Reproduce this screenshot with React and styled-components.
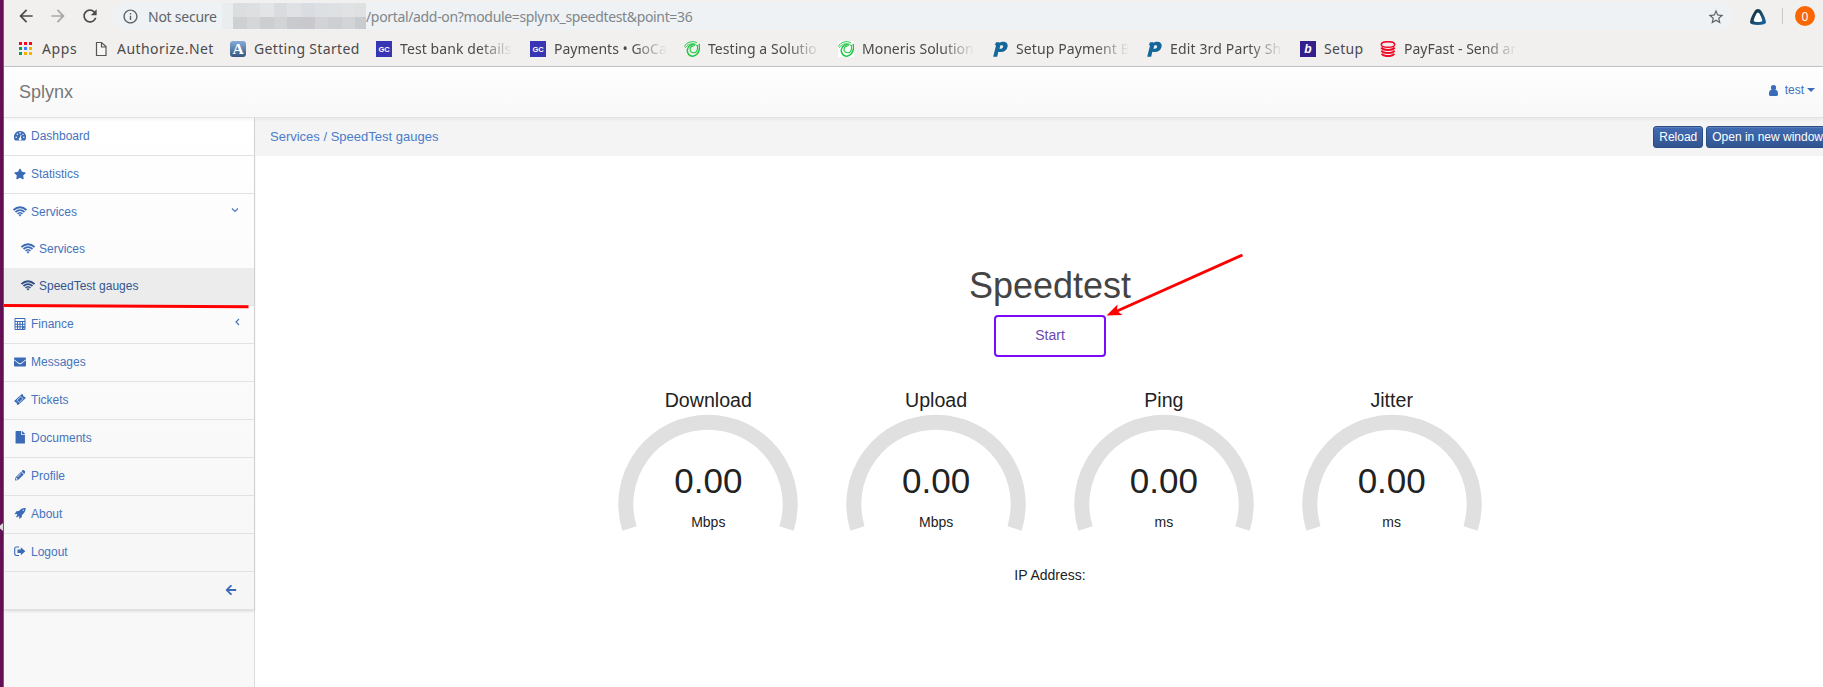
import React from 'react';
import styled, { createGlobalStyle } from 'styled-components';
import { FaStar, FaEnvelope, FaFile, FaPencilAlt, FaArrowLeft } from 'react-icons/fa';
import { MdArrowBack, MdArrowForward, MdRefresh, MdInfoOutline, MdStarBorder } from 'react-icons/md';

const GlobalStyle = createGlobalStyle`
  * { box-sizing: border-box; }
  body { margin: 0; background: #fff; font-family: "Liberation Sans", Arial, sans-serif; overflow: hidden; }
`;

const Screen = styled.div`
  position: relative;
  display: flex;
  width: 1823px;
  height: 687px;
  overflow: hidden;
`;
const DesktopEdge = styled.div`
  flex: none;
  display: flex;
  align-items: flex-end;
  width: 4px;
  padding-bottom: 156px;
  background: #650f54;
  border-right: 1px solid #8a5280;
`;
const EdgeMark = styled.svg`
  display: block;
  width: 3px;
  height: 8px;
`;
const Browser = styled.div`
  flex: 1;
  min-width: 0;
  display: flex;
  flex-direction: column;
`;

/* browser chrome */
const Toolbar = styled.div`
  flex: none;
  display: flex;
  align-items: center;
  height: 34px;
  padding: 0 7px 2px 12px;
  background: #f2f0ef;
  font-family: "Noto Sans", "Open Sans", sans-serif;
`;
const NavIcon = styled.span`
  display: flex;
  width: 20px;
  margin-right: 12px;
  font-size: 20px;
  color: ${(p) => (p.$muted ? '#a8a7a6' : '#4c4b4b')};
`;
const Omnibox = styled.div`
  display: flex;
  align-items: center;
  width: 1621px;
  height: 28px;
  margin-left: 1px;
  padding: 0 9px 0 9px;
  border-radius: 14px;
  background: #eef2f4;
  font-size: 14px;
  color: #80868b;
`;
const InfoIcon = styled.span`
  display: flex;
  margin-top: 1px;
  font-size: 17px;
  color: #5f6368;
`;
const Security = styled.span`
  width: 74px;
  margin-left: 9px;
  white-space: nowrap;
  letter-spacing: -0.25px;
  color: #5f6368;
`;
const Redacted = styled.span`
  display: grid;
  grid-template-columns: 11px repeat(9, 13.6px) 10.6px;
  grid-template-rows: 14px 12px;
  width: 144px;
`;
const Cell = styled.span`
  background: ${(p) => p.$c};
`;
const Path = styled.span`
  flex: 1;
  white-space: nowrap;
  letter-spacing: -0.34px;
`;
const StarIcon = styled.span`
  display: flex;
  margin-top: 2px;
  font-size: 18px;
  color: #5f6368;
`;
const Extension = styled.span`
  display: flex;
  margin: 2px 16px 0 16px;
`;
const Divider = styled.span`
  width: 1px;
  height: 16px;
  background: #c9c8c8;
`;
const Avatar = styled.span`
  display: flex;
  align-items: center;
  justify-content: center;
  width: 20px;
  height: 20px;
  margin-left: 12px;
  border-radius: 50%;
  background: #f96702;
  font-size: 12px;
  color: #fff;
`;
const Bookmarks = styled.div`
  flex: none;
  display: flex;
  height: 33px;
  padding: 7px 0 0 14px;
  background: #f2f0ef;
  border-bottom: 1px solid #c8c7c8;
  font-family: "Noto Sans", "Open Sans", sans-serif;
  font-size: 14px;
`;
const Bookmark = styled.div`
  flex: none;
  display: flex;
  width: ${(p) => p.$w}px;
  height: 17px;
`;
const Favicon = styled.svg`
  flex: none;
  display: block;
  width: 16px;
  height: 16px;
  margin-right: 8px;
`;
const BookmarkName = styled.span`
  width: ${(p) => (p.$fade ? '113px' : 'auto')};
  height: 22px;
  margin-top: -3px;
  line-height: 22px;
  overflow: hidden;
  white-space: nowrap;
  letter-spacing: ${(p) => p.$ls || 0}px;
  color: #4a4a4b;
  ${(p) => p.$fade && 'mask-image: linear-gradient(to right, #000 calc(100% - 34px), transparent);'}
`;

/* portal */
const Header = styled.header`
  position: relative;
  z-index: 1;
  flex: none;
  display: flex;
  justify-content: space-between;
  height: 51px;
  padding: 0 8px 0 15px;
  border-bottom: 1px solid #e3e3e3;
  background: linear-gradient(#fefefe, #f8f8f8);
  box-shadow: 0 1px 4px rgba(0, 0, 0, 0.07);
`;
const Brand = styled.span`
  font-size: 18px;
  line-height: 50px;
  color: #777;
`;
const UserMenu = styled.span`
  display: flex;
  align-items: center;
  height: 46px;
  font-size: 12px;
  color: #4370bb;
`;
const UserName = styled.span`
  margin: 0 3px 0 7px;
`;
const Caret = styled.i`
  border: 4px solid transparent;
  border-bottom: 0;
  border-top-color: #3b6cb8;
`;
const Body = styled.div`
  flex: 1;
  min-height: 0;
  display: flex;
`;
const Sidebar = styled.aside`
  flex: none;
  width: 251px;
  border-right: 1px solid #dcdcdc;
  background: #f8f8f8;
`;
const Menu = styled.nav`
  display: flex;
  flex-direction: column;
  background: linear-gradient(#fff, #f6f6f6);
  box-shadow: 0 1px 3px rgba(0, 0, 0, 0.14);
`;
const MenuItem = styled.a`
  display: flex;
  align-items: center;
  height: ${(p) => (p.$line ? 38 : 37)}px;
  padding: 0 15px 2px ${(p) => (p.$sub ? 17 : 9)}px;
  border-bottom: ${(p) => (p.$line ? '1px solid #e2e2e2' : '0')};
  background: ${(p) => (p.$active ? '#ececec' : 'transparent')};
  font-size: 12px;
  color: ${(p) => (p.$active ? '#34568f' : '#4673bd')};
`;
const MenuIcon = styled.span`
  display: flex;
  align-items: center;
  justify-content: center;
  width: 14px;
  margin-right: 4px;
  font-size: ${(p) => p.$size || 12}px;
  color: ${(p) => (p.$active ? '#2f5187' : '#3b6bb6')};
`;
const MenuLabel = styled.span`
  flex: 1;
`;
const Chevron = styled.svg`
  width: 8px;
  height: 8px;
  margin: 0 ${(p) => p.$inset || 0}px 4px 0;
`;
const Collapse = styled.div`
  display: flex;
  align-items: center;
  justify-content: flex-end;
  height: 38px;
  padding: 0 17px 1px 0;
  border-bottom: 1px solid #e0e0e0;
  font-size: 12px;
  color: #3b6bb6;
`;
const Main = styled.main`
  flex: none;
  display: flex;
  flex-direction: column;
  width: 1590px;
`;
const Crumbs = styled.div`
  display: flex;
  justify-content: space-between;
  align-items: center;
  height: 38px;
  padding: 0 16px 0 15px;
  background: #f4f4f4;
  font-size: 13px;
  color: #4a7dcb;
`;
const CrumbTrail = styled.span`
  padding-bottom: 2px;
`;
const Actions = styled.div`
  display: flex;
  gap: 3px;
`;
const ActionButton = styled.button`
  height: 22px;
  padding: 0 5px;
  border: 1px solid #2a4d86;
  border-radius: 3px;
  background: linear-gradient(#416bb3, #325590);
  box-shadow: inset 0 1px 0 rgba(255, 255, 255, 0.15);
  font: 12px "Liberation Sans", Arial, sans-serif;
  color: #fff;
`;
const Speedtest = styled.section`
  display: flex;
  flex-direction: column;
  align-items: center;
  padding-top: 110px;
  color: #222;
`;
const Title = styled.h1`
  margin: 0 0 9px;
  font-size: 36px;
  font-weight: 400;
  line-height: 40px;
  color: #444;
`;
const StartButton = styled.button`
  width: 112px;
  height: 42px;
  padding: 0 0 3px;
  border: 2px solid #7a0bfb;
  border-radius: 4px;
  background: #fff;
  font: 14px "Liberation Sans", Arial, sans-serif;
  color: #6a48b0;
`;
const Gauges = styled.div`
  display: flex;
  gap: 47.800px;
  margin-top: 31px;
`;
const GaugeBox = styled.div`
  display: grid;
  grid-template-rows: 26px 120px;
  justify-items: center;
  width: 180px;
`;
const GaugeTitle = styled.h2`
  margin: 0;
  font-size: 19.6px;
  font-weight: 400;
  line-height: 24px;
`;
const Dial = styled.svg`
  grid-area: 2 / 1;
  width: 180px;
  height: 120px;
`;
const Reading = styled.div`
  grid-area: 2 / 1;
  display: flex;
  flex-direction: column;
  align-items: center;
  padding-top: 47px;
`;
const Value = styled.span`
  font-size: 35px;
  line-height: 40px;
`;
const Unit = styled.span`
  margin-top: 12px;
  font-size: 14px;
  line-height: 18px;
`;
const IpLine = styled.p`
  margin: 32px 0 0;
  font-size: 14px;
  line-height: 18px;
`;
const Annotations = styled.svg`
  position: absolute;
  inset: 0;
  z-index: 2;
  pointer-events: none;
`;

const pixels = [
  '#e9edee', '#dcdddf', '#dedfe1', '#e3e4e6', '#dadbde', '#e0e1e4', '#d9dde1', '#dce0e3', '#dfe0e4', '#e1e2e3', '#dfe1e1',
  '#e9edee', '#cfd0d2', '#d5d6d7', '#cdced0', '#d2d3d4', '#c9cace', '#c8c8cd', '#d1d3d6', '#cecfd1', '#d3d4d7', '#c9cccf',
];

const AppsIcon = () => (
  <Favicon viewBox="0 0 16 16">
    {['#f02', '#f02', '#f02', '#0a9f58', '#3f7bf5', '#f8b000', '#0a9f58', '#f8b000', '#f8b000'].map((c, i) => (
      <rect key={i} x={1 + (i % 3) * 5} y={1 + Math.floor(i / 3) * 5} width="3" height="3" fill={c} />
    ))}
  </Favicon>
);
const PageIcon = () => (
  <Favicon viewBox="0 0 16 16">
    <path d="M3.500 1.500h5l4.500 4v9H3.500zM8.500 1.500v4.500H13" fill="#f7f6f5" stroke="#555" strokeWidth="1.200" />
  </Favicon>
);
const LetterIcon = ({ bg, children, size, family, dx = 8, dy = 12, italic, fill = '#fff', r = 0, w = 16 }) => (
  <Favicon viewBox="0 0 16 16">
    <defs>
      <linearGradient id="slate" x1="0" y1="0" x2="0" y2="1">
        <stop offset="0" stopColor="#86acd8" />
        <stop offset="1" stopColor="#34577f" />
      </linearGradient>
    </defs>
    {bg && <rect width={w} height="16" rx={r} fill={bg} />}
    <text x={dx} y={dy} textAnchor="middle" fontSize={size} fontFamily={family || 'Liberation Sans'} fontWeight="700" fontStyle={italic ? 'italic' : 'normal'} fill={fill}>
      {children}
    </text>
  </Favicon>
);
const SwirlIcon = ({ boxed }) => (
  <Favicon viewBox="0 0 16 16">
    {boxed && <rect width="16" height="16" fill="#fff" />}
    <g fill="none" stroke="#1dc742" strokeLinecap="round">
      <path d="M.6 5.200C2.500 .8 8.500 -.4 12.500 1.500" strokeWidth="1" />
      <path d="M15.200 3.500c1.200 5-1 10.500-5.500 11.500-4 .8-6.700-2.500-6.400-6 .3-3.600 3.600-5.900 7-5" strokeWidth="1.500" />
      <path d="M13.300 4.500c.9 3.700-.4 7-3.300 7.300-2.700.2-4.300-1.800-3.900-4 .3-1.500 1.500-2.500 3-2.600" strokeWidth="1.100" />
      <path d="M1.500 6.500C4 2 11.500 1.200 13.400 5" strokeWidth=".9" />
    </g>
  </Favicon>
);
const ParcelIcon = () => (
  <Favicon viewBox="0 0 16 16">
    <path d="M4 1.200h3.700l-.3 1.100C8.400 1 9.800.6 11.700.7c3 .2 4.500 2.300 3.800 5.200-.8 3.300-3.400 5.200-6.700 5.200-1 0-1.800-.1-2.500-.4L5.200 15.800H1.200L4.100 4.300H2.800zM8.300 4.500 7.500 7.700c1.600.4 3.200-.2 3.600-1.700.4-1.600-1.500-2.200-2.800-1.500z" fill="#12679b" fillRule="evenodd" />
  </Favicon>
);
const CoinsIcon = () => (
  <Favicon viewBox="0 0 16 16">
    <g fill="none" stroke="#f00a28">
      <ellipse cx="8" cy="3.500" rx="6.700" ry="2.800" strokeWidth="1.500" />
      <path d="M1.300 6.500c1.500 3.200 11.900 3.200 13.400 0M1.500 9.700c1.500 3.200 11.500 3.200 13 0M1.800 12.700c1.500 3.200 10.900 3.200 12.400 0" strokeWidth="2" />
    </g>
  </Favicon>
);

const WifiIcon = () => (
  <svg width="14" height="11" viewBox="0 0 14 11" fill="none" stroke="currentColor">
    <path d="M.5 4.200C4.200.3 9.800.3 13.500 4.200" strokeWidth="1.900" />
    <path d="M2.500 6.200C5.200 3.300 8.800 3.300 11.500 6.200" strokeWidth="1.700" />
    <path d="M4.500 8.100C6 6.400 8 6.400 9.500 8.100" strokeWidth="1.500" />
    <path d="M5.500 8.900Q7 7.800 8.500 8.900L7 10.600z" fill="currentColor" stroke="none" />
  </svg>
);
const DashboardIcon = () => (
  <svg width="12" height="12" viewBox="0 0 12 12">
    <path d="M1 10.500A6 6 0 0 1 6 1a6 6 0 0 1 5 9.500z" fill="currentColor" />
    <g fill="#fdfdfe">
      <circle cx="2.200" cy="7.200" r=".8" />
      <circle cx="3.400" cy="4.200" r=".8" />
      <circle cx="6.100" cy="2.900" r=".8" />
      <circle cx="9.800" cy="7.200" r=".8" />
      <circle cx="9" cy="4.400" r=".7" />
      <path d="M6.700 4.700l.8.200-.6 2.800a1.400 1.400 0 1 1-1-.2z" />
    </g>
  </svg>
);
const CalculatorIcon = () => (
  <svg width="12" height="12" viewBox="0 0 12 12" fill="none" stroke="currentColor">
    <path d="M1 .5h10v11H1zM1 3.500h10M1 6.300h10M1 8.800h10M3.500 4v7.500M6 4v7.500M8.500 4v7.500" strokeWidth="1" />
    <path d="M9 9.500h1.500" strokeWidth="2" />
  </svg>
);
const TicketIcon = () => (
  <svg width="12" height="11" viewBox="0 0 12 11">
    <g transform="rotate(-42 6 5.500)">
      <path d="M.6 2.700h10.800v1.700a1.200 1.200 0 0 0 0 2.200v1.700H.6V6.600a1.200 1.200 0 0 0 0-2.200z" fill="currentColor" />
      <path d="M3.300 3.900h5.400v3.200H3.300z" fill="none" stroke="#fafafa" strokeWidth=".6" />
    </g>
  </svg>
);
const RocketIcon = () => (
  <svg width="12" height="11" viewBox="0 0 12 11">
    <path d="M11.600 0C8.500 0 6.500 1 4.900 3.100L2.500 3.300 .4 6.200l2.400-.2.500 1.200L2 8.600l.9.800 1.400-1.100 1 .5L5 11l2.700-1.700.3-2.400C10.300 5.300 11.700 3.100 11.600 0z" fill="currentColor" />
    <circle cx="9.300" cy="2.200" r=".6" fill="#fff" />
  </svg>
);
const LogoutIcon = () => (
  <svg width="12" height="11" viewBox="0 0 12 11">
    <path d="M5 1H2.300Q.7 1 .7 2.700v5.100q0 1.700 1.600 1.700H5" fill="none" stroke="currentColor" strokeWidth="1.100" />
    <path d="M3.500 3.600h3.300V1.200L11.300 5.300 6.800 9.300V7H3.500z" fill="currentColor" />
  </svg>
);
const UserIcon = () => (
  <svg width="9" height="11" viewBox="0 0 9 11" fill="#3b6cb8">
    <circle cx="4.500" cy="2.700" r="2.600" />
    <path d="M0 9.200C0 6.600.7 5 2.200 5h4.600C8.300 5 9 6.600 9 9.200 9 10.400 8.400 11 7.400 11H1.600C.6 11 0 10.400 0 9.200z" />
  </svg>
);

const bookmarks = [
  { w: 75, name: 'Apps', icon: <AppsIcon />, ls: 0.6 },
  { w: 137, name: 'Authorize.Net', icon: <PageIcon />, ls: 0.45 },
  { w: 146, name: 'Getting Started', icon: <LetterIcon bg="url(#slate)" r={3} size={15.5} family="Liberation Serif" dy={13}>A</LetterIcon>, ls: 0.33 },
  { w: 154, name: 'Test bank details', icon: <LetterIcon bg="#3835b5" size={7.5} dy={10.7}>GC</LetterIcon>, ls: 0.1, fade: true },
  { w: 154, name: 'Payments • GoCa', icon: <LetterIcon bg="#3835b5" size={7.5} dy={10.7}>GC</LetterIcon>, fade: true },
  { w: 154, name: 'Testing a Solutio', icon: <SwirlIcon />, ls: 0.05, fade: true },
  { w: 154, name: 'Moneris Solution', icon: <SwirlIcon boxed />, fade: true },
  { w: 154, name: 'Setup Payment B', icon: <ParcelIcon />, ls: 0.1, fade: true },
  { w: 154, name: 'Edit 3rd Party Sh', icon: <ParcelIcon />, ls: 0.15, fade: true },
  { w: 80, name: 'Setup', icon: <LetterIcon bg="#351f8c" size={12} italic dy={12.2}>b</LetterIcon>, ls: 0.3 },
  { w: 140, name: 'PayFast - Send an', icon: <CoinsIcon />, fade: true },
];

const menu = [
  { label: 'Dashboard', icon: <DashboardIcon />, line: true },
  { label: 'Statistics', icon: <FaStar />, line: true },
  { label: 'Services', icon: <WifiIcon />, open: true },
  { label: 'Services', icon: <WifiIcon />, sub: true },
  { label: 'SpeedTest gauges', icon: <WifiIcon />, sub: true, active: true, line: true },
  { label: 'Finance', icon: <CalculatorIcon />, line: true, closed: true },
  { label: 'Messages', icon: <FaEnvelope />, line: true },
  { label: 'Tickets', icon: <TicketIcon />, line: true },
  { label: 'Documents', icon: <FaFile />, size: 12.5, line: true },
  { label: 'Profile', icon: <FaPencilAlt />, size: 10.5, line: true },
  { label: 'About', icon: <RocketIcon />, line: true },
  { label: 'Logout', icon: <LogoutIcon />, line: true },
];

const gauges = [
  ['Download', 'Mbps'],
  ['Upload', 'Mbps'],
  ['Ping', 'ms'],
  ['Jitter', 'ms'],
];

function Gauge({ title, unit }) {
  return (
    <GaugeBox>
      <GaugeTitle>{title}</GaugeTitle>
      <Dial viewBox="0 0 180 120">
        <path d="M11.400 114.500A82.200 82.200 0 1 1 168.600 114.500" fill="none" stroke="#e0e0e0" strokeWidth="15" />
      </Dial>
      <Reading>
        <Value>0.00</Value>
        <Unit>{unit}</Unit>
      </Reading>
    </GaugeBox>
  );
}

export default function App() {
  return (
    <Screen>
      <GlobalStyle />
      <DesktopEdge>
        <EdgeMark viewBox="0 0 3 8"><path d="M3 0v8L0 5.500v-3z" fill="#ddd" /></EdgeMark>
      </DesktopEdge>
      <Browser>
        <Toolbar>
          <NavIcon><MdArrowBack /></NavIcon>
          <NavIcon $muted><MdArrowForward /></NavIcon>
          <NavIcon><MdRefresh /></NavIcon>
          <Omnibox>
            <InfoIcon><MdInfoOutline /></InfoIcon>
            <Security>Not secure</Security>
            <Redacted>{pixels.map((c, i) => <Cell key={i} $c={c} />)}</Redacted>
            <Path>/portal/add-on?module=splynx_speedtest&amp;point=36</Path>
            <StarIcon><MdStarBorder /></StarIcon>
          </Omnibox>
          <Extension>
            <svg width="16" height="16" viewBox="0 0 16 16">
              <defs>
                <linearGradient id="tri" x1="0" y1="0" x2="1" y2="1">
                  <stop offset="0.3" stopColor="#173b50" />
                  <stop offset="1" stopColor="#1a69ab" />
                </linearGradient>
              </defs>
              <path d="M8 0c1.400 0 2.600.8 3.500 2.200 2 3 3.700 6.800 4.400 10.200.3 1.500-.4 2.500-1.900 2.800-4 .9-8 .9-12 0C.5 14.900-.2 13.900.1 12.400.8 9 2.500 5.200 4.500 2.200 5.400.8 6.600 0 8 0z" fill="url(#tri)" />
              <path d="M8 3.800c-.8 0-1.300.5-1.800 1.400-1 1.800-1.900 3.800-2.400 5.900-.2 1 .2 1.400 1.200 1.600 2 .3 4 .3 6 0 1-.2 1.400-.6 1.200-1.600-.5-2.100-1.400-4.100-2.400-5.900C9.300 4.300 8.800 3.800 8 3.800z" fill="#fff" />
            </svg>
          </Extension>
          <Divider />
          <Avatar>0</Avatar>
        </Toolbar>
        <Bookmarks>
          {bookmarks.map((b, i) => (
            <Bookmark key={i} $w={b.w}>
              {b.icon}
              <BookmarkName $fade={b.fade} $ls={b.ls}>{b.name}</BookmarkName>
            </Bookmark>
          ))}
        </Bookmarks>
        <Header>
          <Brand>Splynx</Brand>
          <UserMenu>
            <UserIcon />
            <UserName>test</UserName>
            <Caret />
          </UserMenu>
        </Header>
        <Body>
          <Sidebar>
            <Menu>
              {menu.map((m, i) => (
                <MenuItem key={i} $line={m.line} $sub={m.sub} $active={m.active}>
                  <MenuIcon $active={m.active} $size={m.size}>{m.icon}</MenuIcon>
                  <MenuLabel>{m.label}</MenuLabel>
                  {m.open && <Chevron viewBox="0 0 8 8"><path d="M1 2.500l3 3 3-3" fill="none" stroke="#4a78c0" strokeWidth="1.200" /></Chevron>}
                  {m.closed && <Chevron $inset={-1.5} viewBox="0 0 8 8"><path d="M6 1L3 4l3 3" fill="none" stroke="#4a78c0" strokeWidth="1.200" /></Chevron>}
                </MenuItem>
              ))}
              <Collapse><FaArrowLeft /></Collapse>
            </Menu>
          </Sidebar>
          <Main>
            <Crumbs>
              <CrumbTrail>Services / SpeedTest gauges</CrumbTrail>
              <Actions>
                <ActionButton>Reload</ActionButton>
                <ActionButton>Open in new window</ActionButton>
              </Actions>
            </Crumbs>
            <Speedtest>
              <Title>Speedtest</Title>
              <StartButton>Start</StartButton>
              <Gauges>
                {gauges.map(([title, unit]) => <Gauge key={title} title={title} unit={unit} />)}
              </Gauges>
              <IpLine>IP Address:</IpLine>
            </Speedtest>
          </Main>
        </Body>
      </Browser>
      <Annotations width="1823" height="687">
        <path d="M4 305.500L248.500 306.700" stroke="#f00" strokeWidth="3" />
        <path d="M1242.500 255L1116 311.500" stroke="#f00" strokeWidth="3" />
        <path d="M1106.500 315.500L1117.500 304.500L1117 311L1122.500 315z" fill="#f00" />
      </Annotations>
    </Screen>
  );
}
